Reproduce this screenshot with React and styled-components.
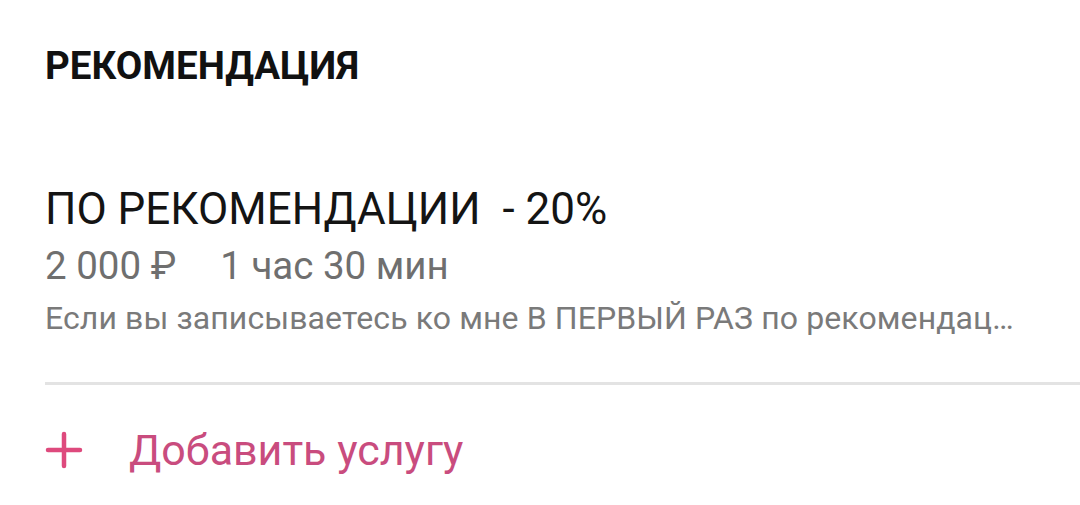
import React from "react";
import styled, { createGlobalStyle } from "styled-components";

const GlobalStyle = createGlobalStyle`
  html, body {
    margin: 0;
    padding: 0;
    background: #ffffff;
  }
  body {
    font-family: Roboto, "Noto Sans", Arial, sans-serif;
    -webkit-font-smoothing: antialiased;
  }
`;

const Screen = styled.div`
  width: 1080px;
  height: 505px;
  overflow: hidden;
  background: #fff;
  padding-left: 45px;
  box-sizing: border-box;
`;

const SectionTitle = styled.h2`
  margin: 0;
  padding-top: 44px;
  font-size: 38.5px;
  line-height: 44px;
  font-weight: 700;
  color: #111;
`;

const Service = styled.div`
  padding-top: 95px;
  padding-bottom: 44px;
  border-bottom: 3px solid #e3e3e3;
`;

const ServiceName = styled.div`
  font-size: 44px;
  line-height: 52px;
  color: #141414;
  white-space: pre;
`;

const Meta = styled.div`
  display: flex;
  gap: 44px;
  margin-top: 9px;
  font-size: 38.5px;
  line-height: 44px;
  color: #6f6f6f;
`;

const Description = styled.div`
  margin-top: 10px;
  font-size: 32px;
  line-height: 40px;
  color: #7a7a7a;
  white-space: nowrap;
  overflow: hidden;
  text-overflow: ellipsis;
  padding-right: 64px;
  letter-spacing: 0.1px;
`;

const AddButton = styled.button`
  display: flex;
  align-items: center;
  gap: 46px;
  margin-top: 40px;
  padding: 0;
  border: none;
  background: none;
  font-family: inherit;
  font-size: 43px;
  line-height: 50px;
  color: #c94c7e;
  cursor: pointer;
`;

const PlusIcon = () => (
  <svg width="38" height="38" viewBox="0 0 38 38">
    <path
      d="M19 3v32M3 19h32"
      stroke="#de4a7d"
      strokeWidth="4.5"
      strokeLinecap="round"
    />
  </svg>
);

export default function App() {
  return (
    <>
      <GlobalStyle />
      <Screen>
        <SectionTitle>РЕКОМЕНДАЦИЯ</SectionTitle>
        <Service>
          <ServiceName>{"ПО РЕКОМЕНДАЦИИ  - 20%"}</ServiceName>
          <Meta>
            <span>2 000 ₽</span>
            <span>1 час 30 мин</span>
          </Meta>
          <Description>
            Если вы записываетесь ко мне В ПЕРВЫЙ РАЗ по рекомендации моего клиента, вы получаете скидку
          </Description>
        </Service>
        <AddButton>
          <PlusIcon />
          Добавить услугу
        </AddButton>
      </Screen>
    </>
  );
}
